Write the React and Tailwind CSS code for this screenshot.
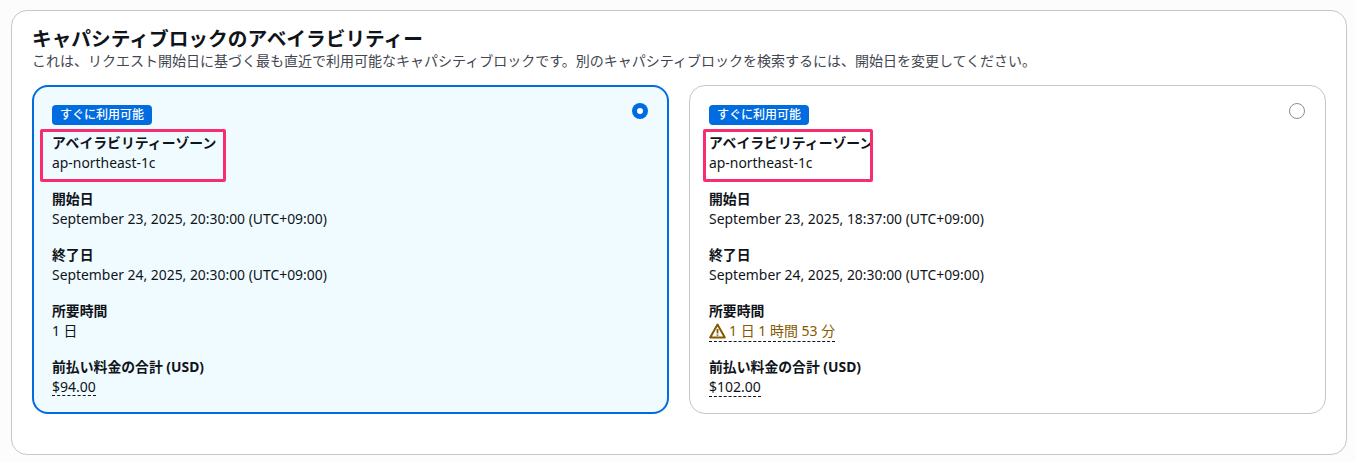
import React from "react";

const Field = ({ label, children }) => (
  <div className="flex flex-col">
    <div className="text-[13.85px] leading-[20px] font-bold text-[#0f141a]">{label}</div>
    <div className="flex h-[20px] items-start text-[13.9px] leading-[20px] text-[#0f141a]">{children}</div>
  </div>
);

const Dashed = ({ children, className = "" }) => (
  <span className={"border-b border-dashed border-[#0f141a] text-[14px] " + className}>{children}</span>
);

const WarningIcon = () => (
  <svg width="17" height="16" viewBox="0 0 17 16" fill="none" className="mr-[3px] shrink-0">
    <path d="M8.5 1.6 1.2 14.4h14.6L8.5 1.6Z" stroke="#855900" strokeWidth="2" strokeLinejoin="round" />
    <path d="M8.5 6v4.4M8.5 11.4v1.4" stroke="#855900" strokeWidth="1.8" />
  </svg>
);

const CapacityCard = ({ selected, start, duration, price }) => (
  <div
    className={
      "relative min-w-0 flex-1 rounded-[16px] " +
      (selected
        ? "border-2 border-[#006ce0] bg-[#f0fbff] px-[18px] pt-[18px]"
        : "border border-[#c6c6cd] bg-white px-[19px] pt-[19px]")
    }
  >
    {selected ? (
      <div className="absolute right-[19px] top-[16px] flex h-4 w-4 items-center justify-center rounded-full bg-[#006ce0]">
        <div className="h-[6px] w-[6px] rounded-full bg-white" />
      </div>
    ) : (
      <div className="absolute right-[20px] top-[17px] h-4 w-4 rounded-full border border-[#8c8c94] bg-white" />
    )}
    <div className="mb-[8px] flex">
      <span className="rounded-[4px] bg-[#006ce0] px-[8px] text-[12px] leading-[20px] font-medium text-white">
        すぐに利用可能
      </span>
    </div>
    <div className="relative mb-[16px]">
      <Field label="アベイラビリティーゾーン">ap-northeast-1c</Field>
      {/* annotation drawn over the screenshot */}
      <div
        className={
          "absolute -top-[4px] h-[53px] rounded-[2px] border-[3px] border-[#f72d70] " +
          (selected ? "-left-[12px] w-[186px]" : "-left-[6px] w-[170px]")
        }
      />
    </div>
    <div className="flex flex-col gap-[16px]">
      <Field label="開始日">{start}</Field>
      <Field label="終了日">September 24, 2025, 20:30:00 (UTC+09:00)</Field>
      <Field label="所要時間">{duration}</Field>
      <Field label="前払い料金の合計 (USD)">
        <Dashed className={"block shrink-0 " + (selected ? "h-[19px]" : "h-[20px]")}>{price}</Dashed>
      </Field>
    </div>
  </div>
);

export default function App() {
  return (
    <div
      className="h-[462px] w-[1356px] overflow-hidden bg-[#fcfcfc] pt-[10px] pl-[11px]"
      style={{ fontFamily: '"Noto Sans", "Noto Sans CJK JP", sans-serif' }}
    >
      <div className="h-[445px] w-[1336px] rounded-[16px] border border-[#c6c6cd] bg-white px-[20px] pt-[15px]">
        <h2 className="text-[19.7px] leading-[25px] font-bold text-[#0f141a]">キャパシティブロックのアベイラビリティー</h2>
        <p className="mb-[14px] text-[14px] leading-[20px] text-[#424650]">
          これは、リクエスト開始日に基づく最も直近で利用可能なキャパシティブロックです。別のキャパシティブロックを検索するには、開始日を変更してください。
        </p>
        <div className="flex h-[329px] gap-[20px]">
          <CapacityCard
            selected
            start="September 23, 2025, 20:30:00 (UTC+09:00)"
            duration="1 日"
            price="$94.00"
          />
          <CapacityCard
            start="September 23, 2025, 18:37:00 (UTC+09:00)"
            duration={
              <Dashed className="flex h-[21px] shrink-0 items-center pb-px text-[#855900]">
                <WarningIcon />1 日 1 時間 53 分
              </Dashed>
            }
            price="$102.00"
          />
        </div>
      </div>
    </div>
  );
}
